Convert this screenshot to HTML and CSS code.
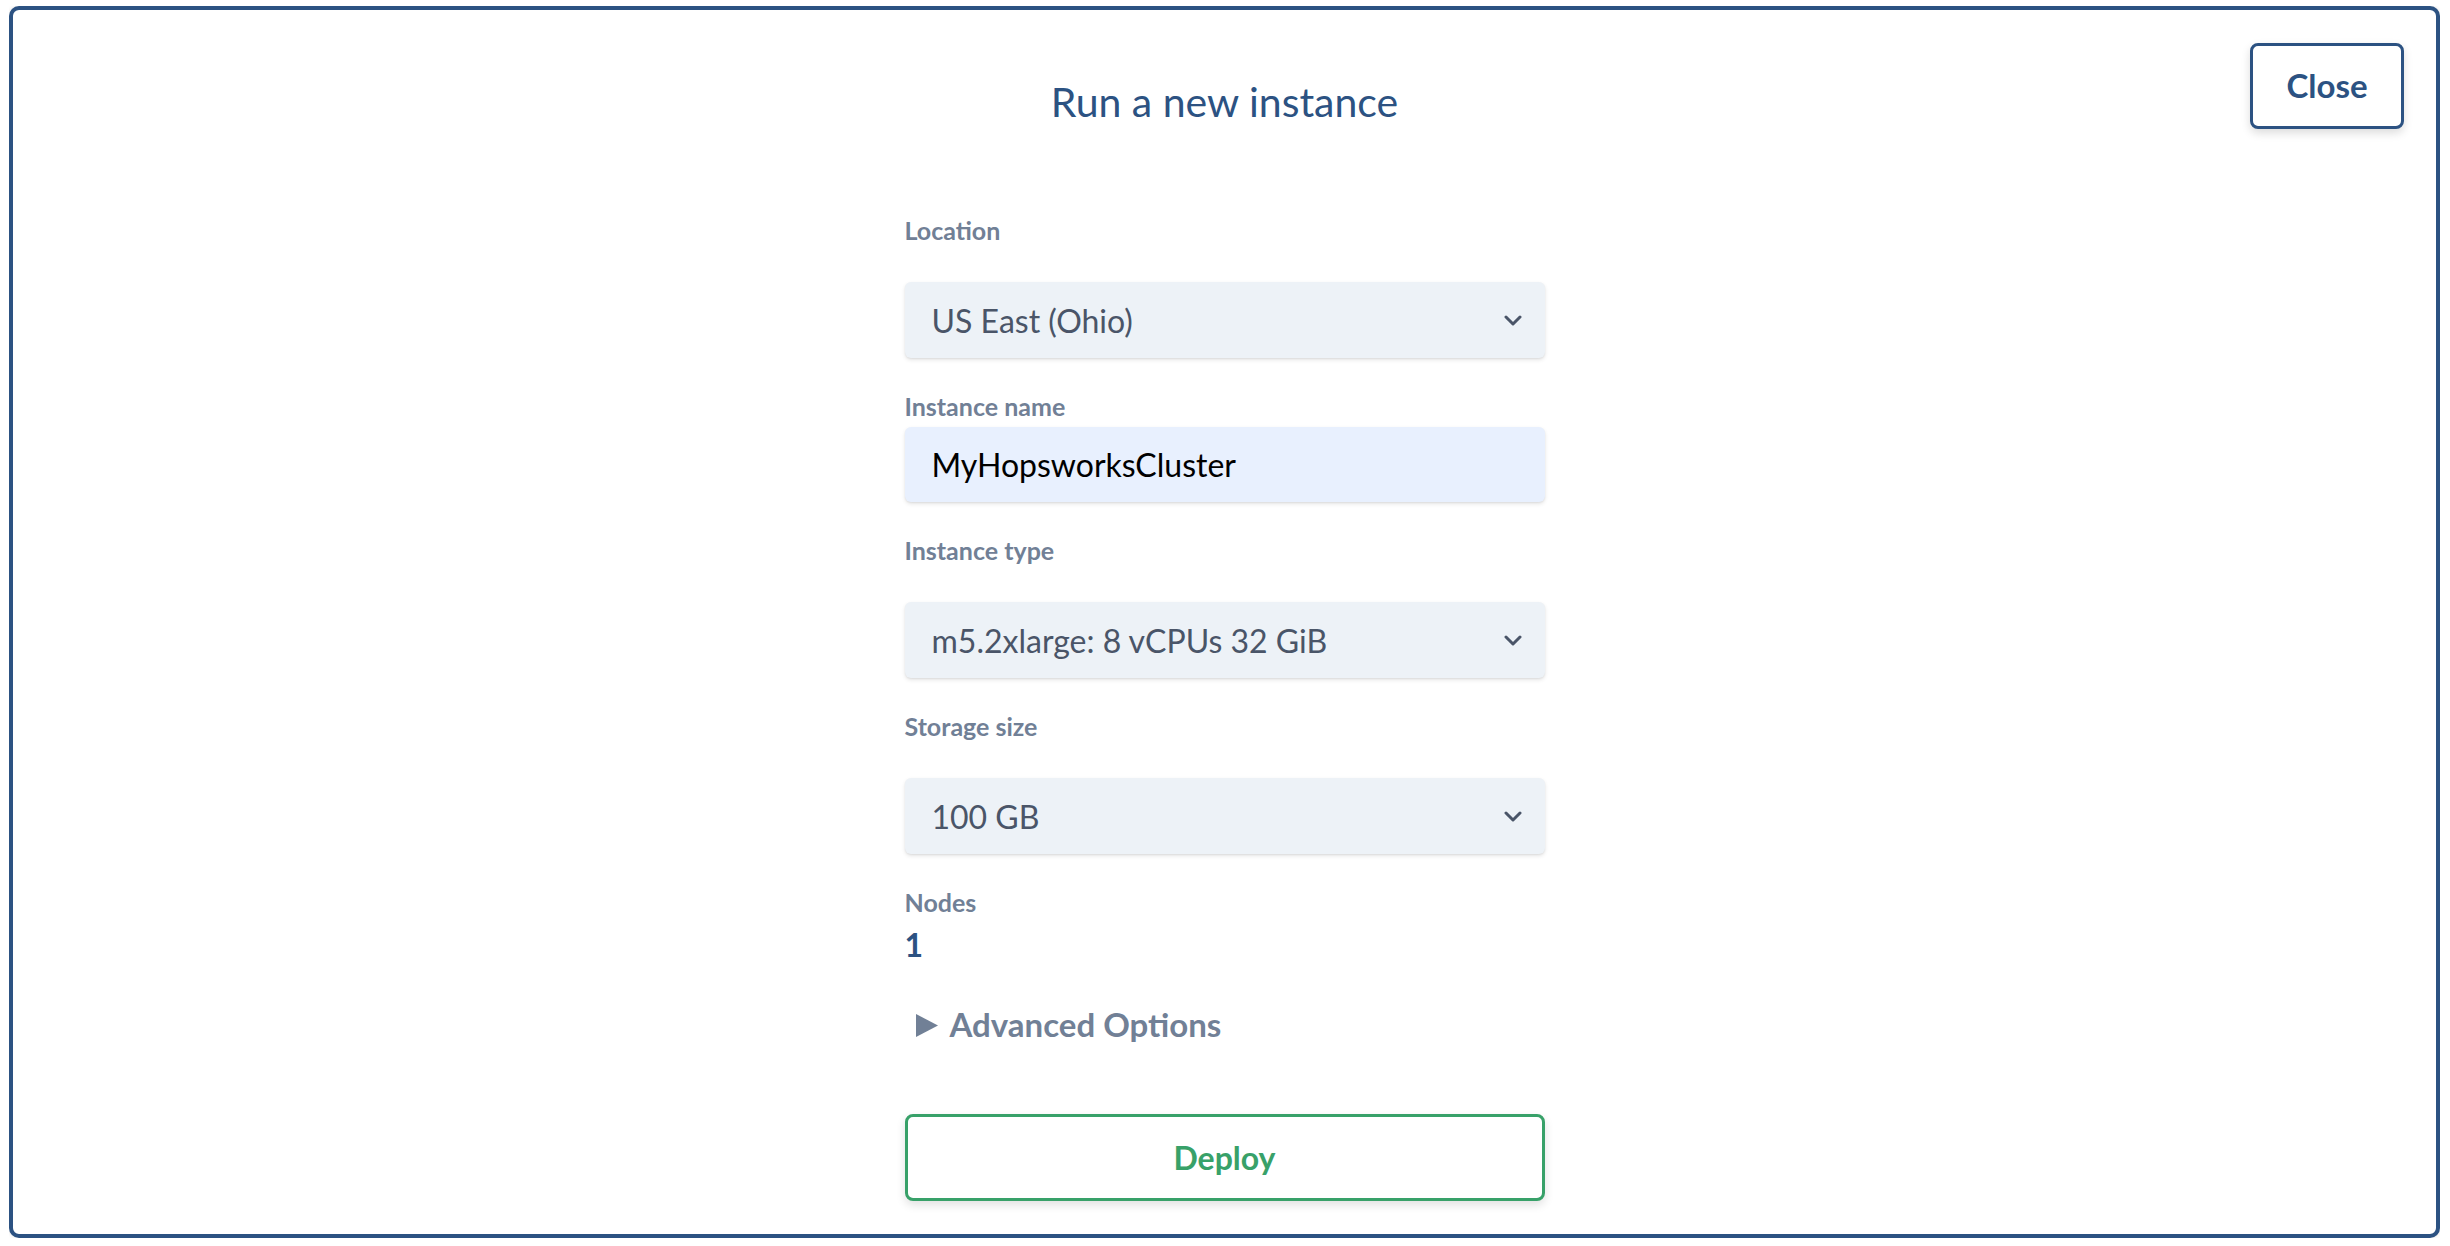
FILE: index.html
```html
<!DOCTYPE html>
<html lang="en">
<head>
<meta charset="utf-8">
<title>Run a new instance</title>
<link rel="stylesheet" href="styles.css">
</head>
<body>
<div class="frame">
  <header class="head">
    <div class="head-spacer"></div>
    <h1 class="title">Run a new instance</h1>
    <button class="close" type="button">Close</button>
  </header>
  <form class="form">
    <div class="field">
      <label class="label label-select">Location</label>
      <div class="select">
        <span>US East (Ohio)</span>
        <svg class="chev" width="18" height="11" viewBox="0 0 18 11"><polyline points="2,2 9,9 16,2" fill="none" stroke="#4a5568" stroke-width="3" stroke-linecap="round" stroke-linejoin="round"/></svg>
      </div>
    </div>
    <div class="field">
      <label class="label label-input">Instance name</label>
      <div class="input">MyHopsworksCluster</div>
    </div>
    <div class="field">
      <label class="label label-select">Instance type</label>
      <div class="select">
        <span>m5.2xlarge: 8 vCPUs 32 GiB</span>
        <svg class="chev" width="18" height="11" viewBox="0 0 18 11"><polyline points="2,2 9,9 16,2" fill="none" stroke="#4a5568" stroke-width="3" stroke-linecap="round" stroke-linejoin="round"/></svg>
      </div>
    </div>
    <div class="field">
      <label class="label label-select">Storage size</label>
      <div class="select">
        <span>100 GB</span>
        <svg class="chev" width="18" height="11" viewBox="0 0 18 11"><polyline points="2,2 9,9 16,2" fill="none" stroke="#4a5568" stroke-width="3" stroke-linecap="round" stroke-linejoin="round"/></svg>
      </div>
    </div>
    <div class="field">
      <label class="label label-value">Nodes</label>
      <div class="value">1</div>
    </div>
    <div class="advanced">
      <svg class="tri" width="22" height="23" viewBox="0 0 22 23"><polygon points="0,0 22,11.5 0,23" fill="#718096"/></svg>
      <span>Advanced Options</span>
    </div>
    <button class="deploy" type="button">Deploy</button>
  </form>
</div>
</body>
</html>
```
FILE: styles.css
```css
html, body {
  background: #ffffff;
}
body {
  margin: 6px 10px 8px 9px;
  font-family: Lato, "Noto Sans", sans-serif;
}
.frame {
  box-sizing: border-box;
  height: calc(100vh - 14px);
  border: 4px solid #2c5282;
  border-radius: 10px;
  box-shadow: 0 0 4px rgba(0, 0, 0, 0.12);
  padding: 33px 32px 0 32px;
  background: #fff;
}
.head {
  display: grid;
  grid-template-columns: 1fr auto 1fr;
  align-items: start;
}
.title {
  margin: 35px 0 0 0;
  font-size: 41px;
  line-height: 48px;
  font-weight: 400;
  color: #2c5282;
}
.close {
  justify-self: end;
  box-sizing: border-box;
  width: 154px;
  height: 86px;
  border: 3px solid #2c5282;
  border-radius: 8px;
  background: #fff;
  color: #2c5282;
  font-family: Lato, "Noto Sans", sans-serif;
  font-size: 33px;
  font-weight: 700;
  box-shadow: 0 4px 10px rgba(0, 0, 0, 0.14);
  padding: 0 0 2px 0;
}
.form {
  width: 640px;
  margin: 86px auto 0 auto;
  display: flex;
  flex-direction: column;
}
.field + .field {
  margin-top: 33px;
}
.label {
  display: block;
  font-size: 25px;
  line-height: 30px;
  font-weight: 700;
  color: #718096;
}
.label-select {
  margin-bottom: 37px;
}
.label-input {
  margin-bottom: 6px;
}
.label-value {
  margin-bottom: 9px;
}
.select, .input {
  box-sizing: border-box;
  display: flex;
  align-items: center;
  justify-content: space-between;
  border-radius: 6px;
  font-size: 32px;
  box-shadow: 0 2px 4px rgba(0, 0, 0, 0.1), 0 1px 2px rgba(0, 0, 0, 0.06);
}
.select {
  height: 76px;
  padding: 0 23px 0 27px;
  background: #edf2f7;
  color: #4a5568;
}
.input {
  height: 75px;
  padding: 0 27px;
  background: #e8f0fe;
  color: #000;
}
.chev {
  display: block;
}
.value {
  font-size: 32px;
  line-height: 38px;
  font-weight: 700;
  color: #2c5282;
}
.advanced {
  margin-top: 41px;
  display: flex;
  align-items: center;
  gap: 12px;
  padding-left: 11px;
  font-size: 33px;
  line-height: 38px;
  font-weight: 700;
  color: #718096;
}
.tri {
  display: block;
  margin-top: 2px;
}
.deploy {
  margin-top: 71px;
  box-sizing: border-box;
  height: 87px;
  width: 100%;
  border: 3px solid #38a169;
  border-radius: 8px;
  background: #fff;
  color: #38a169;
  font-family: Lato, "Noto Sans", sans-serif;
  font-size: 32px;
  font-weight: 700;
  box-shadow: 0 4px 10px rgba(0, 0, 0, 0.12);
  padding: 0;
}
```
